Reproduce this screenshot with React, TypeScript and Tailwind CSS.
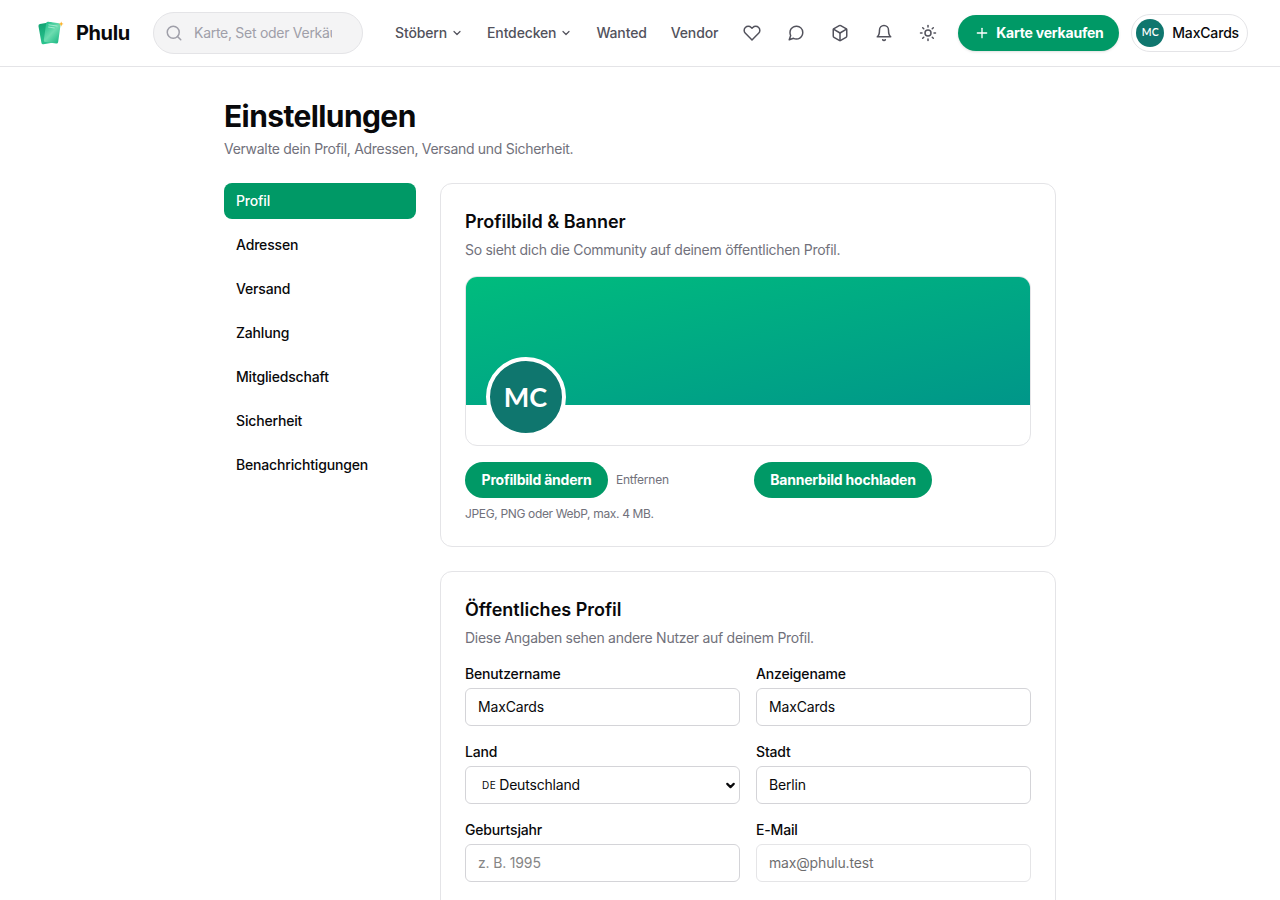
import type { ReactNode } from 'react';
import { ChevronDown, Plus, Search, Sun } from 'lucide-react';
import { FiBell, FiBox, FiHeart, FiMessageCircle } from 'react-icons/fi';

const tabs = [
  'Profil',
  'Adressen',
  'Versand',
  'Zahlung',
  'Mitgliedschaft',
  'Sicherheit',
  'Benachrichtigungen',
];

const inputClass =
  'block h-[38px] w-full rounded-md border border-zinc-300 bg-white px-3 pb-0.5 text-sm tracking-[-0.012em] text-zinc-950 outline-none';

const buttonClass =
  'h-9 rounded-full bg-[#009966] text-sm font-bold tracking-[-0.015em] whitespace-nowrap text-white';

function Logo() {
  return (
    <svg width="28" height="28" viewBox="0 0 28 28" aria-hidden="true">
      <defs>
        <linearGradient id="cardBack" x1="0" y1="0" x2="0" y2="1">
          <stop offset="0" stopColor="#12a574" />
          <stop offset="1" stopColor="#2cc48f" />
        </linearGradient>
        <linearGradient id="cardFront" x1="0" y1="0" x2="1" y2="1">
          <stop offset="0" stopColor="#1fbf8a" />
          <stop offset="0.5" stopColor="#6ddcb0" />
          <stop offset="1" stopColor="#1bb883" />
        </linearGradient>
      </defs>
      <rect x="3.8" y="4" width="14" height="20.5" rx="1.8" fill="url(#cardBack)" transform="rotate(-10 11 14)" />
      <rect x="9" y="3.4" width="14.5" height="20.5" rx="1.8" fill="url(#cardFront)" transform="rotate(8 16 13)" />
      <path d="M12.5 5.8l9 1.3M12.2 8l6.5 1" stroke="#b6f0d8" strokeWidth="0.8" />
      <path d="M25.2 2.4l.7 1.8 1.8.7-1.8.7-.7 1.8-.7-1.8-1.8-.7 1.8-.7z" fill="#fbb024" />
    </svg>
  );
}

function NavLink({ label, menu = false }: { label: string; menu?: boolean }) {
  return (
    <a href="#" className="flex items-center gap-1 px-3 text-sm font-medium text-zinc-600">
      <span className="whitespace-nowrap tracking-[-0.01em]">{label}</span>
      {menu && <ChevronDown size={12} strokeWidth={2.4} />}
    </a>
  );
}

function IconButton({ label, children }: { label: string; children: ReactNode }) {
  return (
    <button type="button" aria-label={label} className="flex size-11 items-center justify-center text-zinc-600">
      {children}
    </button>
  );
}

function Header() {
  return (
    <header className="flex h-[67px] items-center border-b border-zinc-200 bg-white pl-9">
      <a href="#" className="flex w-[117px] shrink-0 items-center gap-3">
        <Logo />
        <span className="text-xl font-bold tracking-[-0.02em]">Phulu</span>
      </a>
      <div className="flex h-[42px] w-[210px] shrink-0 items-center rounded-full border border-zinc-200 bg-zinc-100 pr-[30px] pl-[11px]">
        <Search size={18} className="shrink-0 text-zinc-400" />
        <input
          type="text"
          placeholder="Karte, Set oder Verkäufer suchen"
          className="ml-[11px] w-full min-w-0 bg-transparent text-sm tracking-[-0.02em] outline-none placeholder:text-zinc-400"
        />
      </div>
      <nav className="ml-5 flex shrink-0 items-center">
        <NavLink label="Stöbern" menu />
        <NavLink label="Entdecken" menu />
        <NavLink label="Wanted" />
        <NavLink label="Vendor" />
      </nav>
      <div className="ml-auto flex shrink-0 items-center pr-8">
        <IconButton label="Merkliste"><FiHeart size={18} /></IconButton>
        <IconButton label="Nachrichten"><FiMessageCircle size={18} /></IconButton>
        <IconButton label="Bestellungen"><FiBox size={18} /></IconButton>
        <IconButton label="Mitteilungen"><FiBell size={18} /></IconButton>
        <IconButton label="Design"><Sun size={18} /></IconButton>
        <button
          type="button"
          className={`${buttonClass} ml-2 flex w-[161px] items-center gap-1.5 pl-4 shadow-sm`}
        >
          <Plus size={16} />
          <span>Karte verkaufen</span>
        </button>
        <a href="#" className="ml-3 flex h-[38px] w-[117px] items-center gap-2 rounded-full border border-zinc-200 pl-1">
          <span className="flex size-7 shrink-0 items-center justify-center rounded-full bg-[#0f766e] font-['Lato',sans-serif] text-[10.5px] font-semibold text-white">
            MC
          </span>
          <span className="text-sm font-medium tracking-[-0.012em]">MaxCards</span>
        </a>
      </div>
    </header>
  );
}

function Card({ title, description, children }: { title: string; description: string; children: ReactNode }) {
  return (
    <section className="rounded-xl border border-zinc-200 bg-white p-6">
      <h2 className="text-lg leading-7 font-semibold tracking-normal">{title}</h2>
      <p className="mt-1 text-sm tracking-[-0.02em] text-zinc-500">{description}</p>
      <div className="mt-4">{children}</div>
    </section>
  );
}

function Field({ label, children }: { label: string; children: ReactNode }) {
  return (
    <label className="block">
      <span className="mb-1 block text-sm font-medium tracking-[-0.012em]">{label}</span>
      {children}
    </label>
  );
}

function ImageSettings() {
  return (
    <Card title="Profilbild & Banner" description="So sieht dich die Community auf deinem öffentlichen Profil.">
      <div className="overflow-hidden rounded-xl border border-zinc-200">
        <div className="h-32 bg-linear-to-br from-[#00bc7d] to-[#009689]" />
        <div className="h-10 pl-5">
          <div className="relative -top-12 flex size-20 items-center justify-center rounded-full border-4 border-white bg-[#0f766e] pr-px font-['Lato',sans-serif] text-[27px] font-bold text-white">
            MC
          </div>
        </div>
      </div>
      <div className="mt-4 grid grid-cols-2 gap-3">
        <div>
          <div className="flex items-center gap-2">
            <button type="button" className={`${buttonClass} w-[143px]`}>
              Profilbild ändern
            </button>
            <button type="button" className="text-xs tracking-[-0.02em] text-zinc-500">Entfernen</button>
          </div>
          <p className="mt-2 text-xs tracking-[-0.029em] text-zinc-500">JPEG, PNG oder WebP, max. 4 MB.</p>
        </div>
        <div>
          <button type="button" className={`${buttonClass} w-[178px]`}>
            Bannerbild hochladen
          </button>
        </div>
      </div>
    </Card>
  );
}

function PublicProfile() {
  return (
    <Card title="Öffentliches Profil" description="Diese Angaben sehen andere Nutzer auf deinem Profil.">
      <div className="grid grid-cols-2 gap-4 pb-24">
        <Field label="Benutzername">
          <input className={inputClass} defaultValue="MaxCards" />
        </Field>
        <Field label="Anzeigename">
          <input className={inputClass} defaultValue="MaxCards" />
        </Field>
        <Field label="Land">
          <span className="flex h-[38px] items-center rounded-md border border-zinc-300 pr-0.5 pl-4 text-sm">
            <span className="mr-[3px] pt-px text-[10px] tracking-[0.05em]">DE</span>
            <span className="tracking-[-0.014em]">Deutschland</span>
            <ChevronDown size={13} strokeWidth={4} className="ml-auto" />
          </span>
        </Field>
        <Field label="Stadt">
          <input className={inputClass} defaultValue="Berlin" />
        </Field>
        <Field label="Geburtsjahr">
          <input className={`${inputClass} placeholder:text-[#858585]`} placeholder="z. B. 1995" />
        </Field>
        <Field label="E-Mail">
          <input className={`${inputClass} opacity-60`} defaultValue="max@phulu.test" disabled />
        </Field>
      </div>
    </Card>
  );
}

export default function App() {
  return (
    <div className="h-[900px] overflow-hidden bg-white font-['Inter','Liberation_Sans',sans-serif] text-zinc-950">
      <Header />
      <main className="mx-auto w-[832px] pt-[31px]">
        <h1 className="text-3xl leading-9 font-bold tracking-[-0.02em]">Einstellungen</h1>
        <p className="mt-[5px] text-sm tracking-[-0.021em] text-zinc-500">
          Verwalte dein Profil, Adressen, Versand und Sicherheit.
        </p>
        <div className="mt-6 flex items-start gap-6">
          <nav className="flex w-48 shrink-0 flex-col gap-2">
            {tabs.map((tab, index) => (
              <a
                key={tab}
                href="#"
                className={`rounded-lg px-3 py-2 text-sm font-medium tracking-[-0.012em] ${
                  index === 0 ? 'bg-[#009966] text-white' : 'text-zinc-950'
                }`}
              >
                {tab}
              </a>
            ))}
          </nav>
          <div className="flex min-w-0 flex-1 flex-col gap-6">
            <ImageSettings />
            <PublicProfile />
          </div>
        </div>
      </main>
    </div>
  );
}
